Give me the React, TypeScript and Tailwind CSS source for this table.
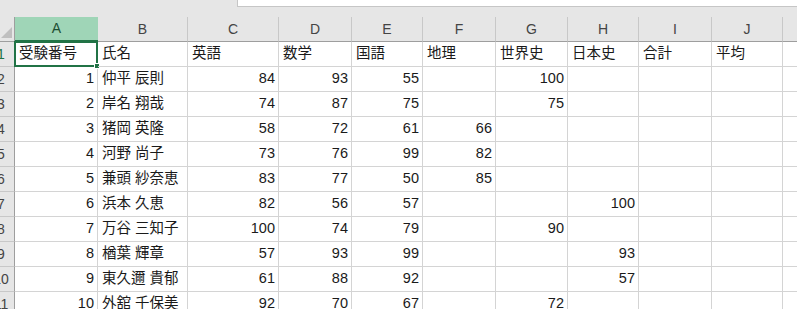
import React from "react";

const cols = ["A", "B", "C", "D", "E", "F", "G", "H", "I", "J"];
const widths = [83, 90, 91, 73, 71, 73, 72, 71, 73, 71];
const headers = ["受験番号", "氏名", "英語", "数学", "国語", "地理", "世界史", "日本史", "合計", "平均"];

type Row = (string | number | null)[];
const data: Row[] = [
  [1, "仲平 辰則", 84, 93, 55, null, 100, null],
  [2, "岸名 翔哉", 74, 87, 75, null, 75, null],
  [3, "猪岡 英隆", 58, 72, 61, 66, null, null],
  [4, "河野 尚子", 73, 76, 99, 82, null, null],
  [5, "兼頭 紗奈恵", 83, 77, 50, 85, null, null],
  [6, "浜本 久恵", 82, 56, 57, null, null, 100],
  [7, "万谷 三知子", 100, 74, 79, null, 90, null],
  [8, "楢葉 輝章", 57, 93, 99, null, null, 93],
  [9, "東久邇 貴郁", 61, 88, 92, null, null, 57],
  [10, "外舘 千保美", 92, 70, 67, null, 72, null],
];

const font = { fontFamily: '"Liberation Sans", "Noto Sans CJK JP", sans-serif' };

function RowHeader({ n, active }: { n: number; active?: boolean }) {
  return (
    <div className="w-[15px] shrink-0 h-full bg-[#e6e6e6] border-r border-b border-r-[#9e9e9e] border-b-[#c8c8c8] overflow-hidden flex justify-end">
      <div className={`w-[26px] shrink-0 h-full flex items-center justify-center text-[14px] ${active ? "text-[#217346]" : "text-[#444]"}`}>
        {n}
      </div>
    </div>
  );
}

export default function App() {
  return (
    <div className="w-[797px] h-[309px] overflow-hidden bg-white text-[#1a1a1a]" style={font}>
      {/* top bar */}
      <div className="h-[17px] bg-[#e6e6e6] flex">
        <div className="ml-[237px] flex-1 h-[7px] bg-white border-l border-b border-[#c6c6c6]" />
      </div>
      {/* column headers */}
      <div className="flex h-[25px]">
        <div className="w-[15px] shrink-0 h-full bg-[#e6e6e6] border-r border-b border-[#9e9e9e] flex items-end justify-end">
          <svg width="13" height="13" viewBox="0 0 13 13" className="mb-[2px] mr-[1px]">
            <polygon points="1,12 12,1 12,12" fill="#bfbfbf" />
          </svg>
        </div>
        {cols.map((c, i) => (
          <div
            key={c}
            style={{ width: widths[i] }}
            className={`shrink-0 h-full flex items-center justify-center text-[14px] border-b ${
              i === 0
                ? "bg-[#9fd5b7] border-b-2 border-b-[#217346] text-[#1d4f33]"
                : "bg-[#e6e6e6] border-b-[#9e9e9e] border-r border-r-[#c8c8c8] text-[#444]"
            }`}
          >
            {c}
          </div>
        ))}
        <div className="flex-1 h-full bg-[#e6e6e6] border-b border-[#9e9e9e]" />
      </div>
      {/* row 1 headers */}
      <div className="flex h-[25px]">
        <RowHeader n={1} active />
        {headers.map((h, i) => (
          <div
            key={i}
            style={{ width: widths[i] }}
            className="relative shrink-0 h-full border-r border-b border-[#d4d4d4] flex items-center pl-[4px] text-[14.5px] whitespace-nowrap"
          >
            {h}
            {i === 0 && (
              <div className="absolute left-[-1px] top-[-1px] right-[-1px] bottom-[-1px] border-2 border-[#217346]">
                <div className="absolute right-[-4px] bottom-[-4px] w-[6px] h-[6px] bg-[#217346] border border-white" />
              </div>
            )}
          </div>
        ))}
        <div className="flex-1 h-full border-b border-[#d4d4d4]" />
      </div>
      {data.map((row, r) => (
        <div key={r} className="flex h-[25px]">
          <RowHeader n={r + 2} />
          {widths.map((w, i) => {
            const v = i < row.length ? row[i] : null;
            const isNum = typeof v === "number";
            return (
              <div
                key={i}
                style={{ width: w }}
                className={`shrink-0 h-full border-r border-b border-[#d4d4d4] flex items-center text-[14.5px] whitespace-nowrap ${
                  isNum ? "justify-end pr-[3px]" : "pl-[4px]"
                }`}
              >
                {v}
              </div>
            );
          })}
          <div className="flex-1 h-full border-b border-[#d4d4d4]" />
        </div>
      ))}
    </div>
  );
}
